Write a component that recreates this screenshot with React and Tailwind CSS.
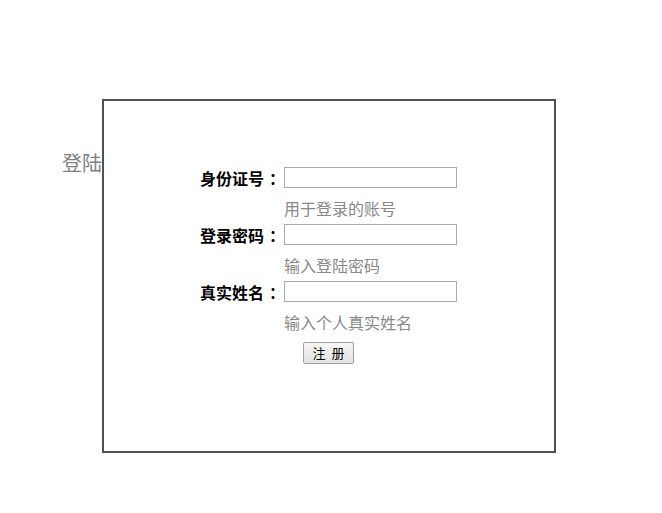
export default function App() {
  const font = { fontFamily: '"Microsoft YaHei", "Noto Sans CJK SC", sans-serif' };
  const rows = [
    { label: "身份证号", hint: "用于登录的账号" },
    { label: "登录密码", hint: "输入登陆密码" },
    { label: "真实姓名", hint: "输入个人真实姓名" },
  ];
  return (
    <div className="w-[662px] h-[513px] bg-white" style={font}>
      <div className="flex pt-[99px] pl-[62px]">
        <div className="mt-[50px] text-[20px] leading-[28px] text-[#808080] w-[40px] whitespace-nowrap">登陆</div>
        <div className="w-[454px] h-[354px] border-2 border-[#505050] pt-[66px]">
          <div className="grid grid-cols-[180px_auto]">
            {rows.map((r) => (
              <div key={r.label} className="contents">
                <div className="flex items-center justify-end h-[21px] pr-[4px] text-[16px] font-bold text-black whitespace-nowrap">
                  <span>{r.label}</span>
                  <span className="inline-block w-[16px] pl-[5px] overflow-visible whitespace-nowrap">：</span>
                </div>
                <div>
                  <input type="text" className="block w-[173px] h-[21px] border border-[#a9a9a9] bg-white outline-none" />
                  <div className="mt-[8px] mb-[4px] h-[24px] leading-[24px] text-[16px] text-[#888888] whitespace-nowrap">{r.hint}</div>
                </div>
              </div>
            ))}
            <div />
            <div className="pt-[1px] pl-[19px]">
              <button className="w-[51px] h-[22px] border border-[#a0a0a0] rounded-[2px] bg-gradient-to-b from-[#f6f6f6] to-[#e2e2e2] text-[13px] leading-[20px] text-black">
                注&nbsp;&nbsp;册
              </button>
            </div>
          </div>
        </div>
      </div>
    </div>
  );
}
